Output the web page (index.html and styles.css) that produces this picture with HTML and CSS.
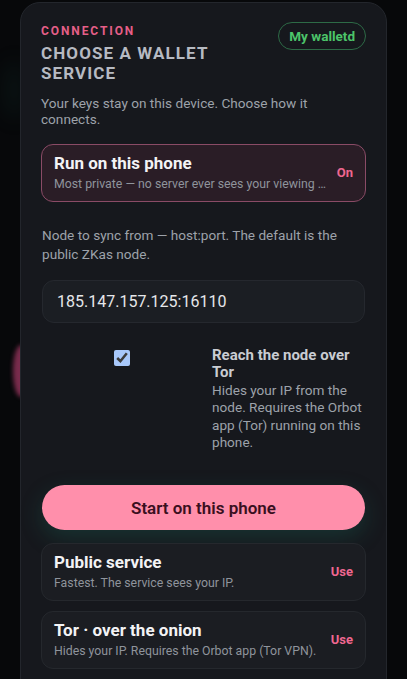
FILE: index.html
```html
<!DOCTYPE html>
<html lang="en">
<head>
<meta charset="utf-8">
<meta name="viewport" content="width=device-width, initial-scale=1">
<title>Choose a wallet service</title>
<link rel="stylesheet" href="styles.css">
</head>
<body>
  <div class="glow glow-pink"></div>
  <div class="glow glow-green"></div>
  <main class="card">
    <header class="head">
      <div class="head-text">
        <div class="eyebrow">CONNECTION</div>
        <h1 class="title">CHOOSE A WALLET SERVICE</h1>
      </div>
      <span class="badge">My walletd</span>
    </header>
    <p class="lead">Your keys stay on this device. Choose how it connects.</p>

    <div class="option option-active">
      <div class="option-body">
        <div class="option-title">Run on this phone</div>
        <div class="option-sub">Most private — no server ever sees your viewing key.</div>
      </div>
      <span class="option-action">On</span>
    </div>

    <section class="local">
      <p class="hint">Node to sync from — host:port. The default is the public ZKas node.</p>
      <input class="node-input" type="text" value="185.147.157.125:16110">
      <label class="tor-row">
        <span class="check-cell"><input class="check" type="checkbox" checked></span>
        <span class="tor-text">
          <strong class="tor-title">Reach the node over Tor</strong>
          <span class="tor-sub">Hides your IP from the node. Requires the Orbot app (Tor) running on this phone.</span>
        </span>
      </label>
      <button class="start" type="button">Start on this phone</button>
    </section>

    <div class="option">
      <div class="option-body">
        <div class="option-title">Public service</div>
        <div class="option-sub">Fastest. The service sees your IP.</div>
      </div>
      <span class="option-action">Use</span>
    </div>

    <div class="option">
      <div class="option-body">
        <div class="option-title">Tor · over the onion</div>
        <div class="option-sub">Hides your IP. Requires the Orbot app (Tor VPN).</div>
      </div>
      <span class="option-action">Use</span>
    </div>
  </main>
</body>
</html>
```

FILE: styles.css
```css
* { box-sizing: border-box; }

html, body {
  margin: 0;
  padding: 0;
  height: 100%;
  overflow: hidden;
}

body {
  background: #07080a;
  font-family: Roboto, "Noto Sans", "Liberation Sans", sans-serif;
  color: #e8e9ec;
  position: relative;
}

.glow {
  position: absolute;
  border-radius: 50%;
  z-index: 0;
}

.glow-pink {
  left: 13px;
  top: 345px;
  width: 16px;
  height: 52px;
  background: rgba(150, 52, 92, 0.8);
  filter: blur(2px);
}

.glow-green {
  left: 4px;
  top: 60px;
  width: 20px;
  height: 60px;
  background: rgba(40, 120, 100, 0.1);
  filter: blur(10px);
}

.card {
  position: relative;
  z-index: 1;
  margin: 2px 20px 0;
  min-height: 720px;
  background: #16181d;
  border: 1px solid #23262c;
  border-radius: 20px;
  padding: 20px 20px 20px;
}

.head {
  display: flex;
  align-items: flex-start;
  justify-content: space-between;
  gap: 12px;
}

.eyebrow {
  color: #e55f88;
  font-size: 12px;
  line-height: 16px;
  font-weight: 700;
  letter-spacing: 1.9px;
}

.title {
  margin: 4px 0 0;
  color: #b6bac2;
  font-size: 17px;
  line-height: 20px;
  font-weight: 700;
  letter-spacing: 1.1px;
}

.badge {
  flex: none;
  margin-top: -1px;
  padding: 4px 10px;
  border: 1px solid #2d6a46;
  border-radius: 999px;
  color: #4cc46a;
  font-size: 13.5px;
  line-height: 18px;
  font-weight: 700;
}

.lead {
  margin: 12px 0 0;
  color: #9da2aa;
  font-size: 13.6px;
  line-height: 16px;
}

.option {
  display: flex;
  align-items: center;
  gap: 10px;
  margin-top: 10px;
  padding: 8px 12px 9px;
  background: #1b1d22;
  border: 1px solid #25282d;
  border-radius: 12px;
}

.option-active {
  margin-top: 17px;
  background: #2a1d26;
  border-color: #8a4b66;
}

.option-body {
  flex: 1;
  min-width: 0;
}

.option-title {
  color: #f3f3f5;
  font-size: 17px;
  line-height: 20px;
  font-weight: 700;
}

.option-sub {
  margin-top: 3px;
  color: #8f949c;
  font-size: 12.3px;
  line-height: 16px;
  white-space: nowrap;
  overflow: hidden;
  text-overflow: ellipsis;
}

.option-action {
  flex: none;
  color: #ef6790;
  font-size: 13px;
  line-height: 16px;
  font-weight: 700;
}

.local {
  padding: 0 1px;
  margin-bottom: 13px;
}

.local + .option {
  margin-top: 0;
}

.hint {
  margin: 24px 0 0;
  color: #9da2aa;
  font-size: 13.6px;
  line-height: 19px;
}

.node-input {
  display: block;
  width: 100%;
  margin-top: 16px;
  height: 43px;
  padding: 0 14px;
  background: #1b1e23;
  border: 1px solid #25282e;
  border-radius: 12px;
  color: #e6e7ea;
  font-family: inherit;
  font-size: 16px;
  outline: none;
}

.tor-row {
  display: grid;
  grid-template-columns: 160px 1fr;
  column-gap: 10px;
  margin-top: 24px;
}

.check-cell {
  display: flex;
  justify-content: center;
  align-items: flex-start;
}

.check {
  width: 16px;
  height: 16px;
  margin: 3px 0 0;
  color-scheme: dark;
  accent-color: #a8c8fa;
}

.tor-text {
  display: flex;
  flex-direction: column;
  font-size: 13.6px;
  line-height: 17.4px;
}

.tor-title {
  color: #c9ccd2;
  font-size: 15px;
  font-weight: 700;
}

.tor-sub {
  color: #9da2aa;
}

.start {
  display: block;
  width: 100%;
  height: 45px;
  margin-top: 34px;
  border: none;
  border-radius: 999px;
  background: #ff8fab;
  color: #3a0f20;
  font-family: inherit;
  font-size: 17px;
  font-weight: 600;
  box-shadow: 0 8px 22px rgba(30, 120, 100, 0.28);
}
```
